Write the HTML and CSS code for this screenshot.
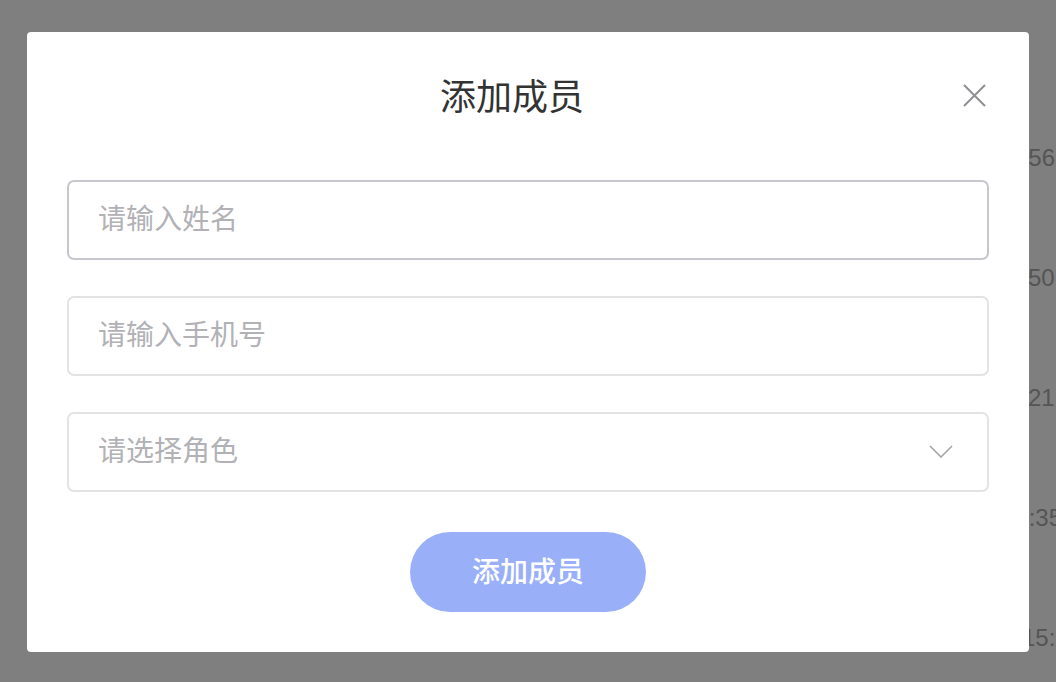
FILE: index.html
```html
<!DOCTYPE html>
<html lang="zh-CN">
<head>
<meta charset="utf-8">
<title>添加成员</title>
<link rel="stylesheet" href="styles.css">
</head>
<body>
<div class="page">
  <div class="row r1"><span class="time">2023-05-12 10:23:56</span></div>
  <div class="row r2"><span class="time">2023-05-11 18:50:32</span></div>
  <div class="row r3"><span class="time">2023-05-10 09:21:47</span></div>
  <div class="row r4"><span class="time">2023-05-09 16:12:35</span></div>
  <div class="row r5"><span class="time">2023-05-08 11:15:08</span></div>
</div>
<div class="overlay"></div>
<div class="modal">
  <div class="header">
    <h2 class="title">添加成员</h2>
    <span class="close" aria-label="关闭">
      <svg width="23" height="23" viewBox="0 0 23 23"><path d="M1 1 L22 22 M22 1 L1 22" stroke="#8f8f94" stroke-width="2" fill="none"/></svg>
    </span>
  </div>
  <div class="form">
    <input class="field focused" type="text" placeholder="请输入姓名">
    <input class="field" type="text" placeholder="请输入手机号">
    <div class="field select">
      <span class="placeholder">请选择角色</span>
      <svg class="chev" width="24" height="13" viewBox="0 0 24 13"><path d="M1 1 L12 12 L23 1" stroke="#a3a3a8" stroke-width="1.5" fill="none"/></svg>
    </div>
    <button class="submit" type="button">添加成员</button>
  </div>
</div>
</body>
</html>
```
FILE: styles.css
```css
html, body {
  margin: 0;
  padding: 0;
  width: 1056px;
  height: 682px;
  overflow: hidden;
  background: #ffffff;
  font-family: "Liberation Sans", "Noto Sans CJK SC", sans-serif;
}

.page {
  padding-top: 98px;
  width: 1056px;
}

.row {
  height: 120px;
  display: flex;
  align-items: center;
  justify-content: flex-end;
}

.time {
  font-size: 24px;
  color: #aaaaaa;
  white-space: nowrap;
}

.r1 { margin-right: 1px; }
.r2 { margin-right: -32px; }
.r3 { margin-right: -32px; }
.r4 { margin-right: -6px; }
.r5 { margin-right: -26px; }

.overlay {
  position: fixed;
  inset: 0;
  background: rgba(0, 0, 0, 0.5);
}

.modal {
  position: fixed;
  left: 27px;
  top: 32px;
  width: 1002px;
  height: 620px;
  box-sizing: border-box;
  background: #ffffff;
  border-radius: 4px;
  padding: 40px;
  font-family: "Noto Sans CJK SC", "Liberation Sans", sans-serif;
}

.header {
  display: flex;
  align-items: center;
  padding-right: 3px;
}

.title {
  flex: 1;
  margin: -3px 0 3px 0;
  text-align: center;
  font-size: 36px;
  font-weight: 400;
  line-height: 50px;
  color: #333333;
}

.close {
  width: 23px;
  height: 23px;
  margin-left: 6px;
  margin-top: -4px;
  display: flex;
}

.form {
  margin-top: 58px;
  display: flex;
  flex-direction: column;
  align-items: center;
  gap: 36px;
}

.field {
  width: 100%;
  height: 80px;
  box-sizing: border-box;
  border: 2px solid #e3e3e6;
  border-radius: 7px;
  padding: 0 34px 6px 29px;
  font-family: "Noto Sans CJK SC", sans-serif;
  font-size: 28px;
  color: #333333;
  background: #ffffff;
  outline: none;
  margin: 0;
}

.field.focused {
  border-color: #c6c7cc;
}

.field::placeholder,
.placeholder {
  color: #b1b1b6;
}

.select {
  display: flex;
  align-items: center;
  justify-content: space-between;
}

.chev {
  display: block;
  margin-top: 4px;
}

.submit {
  margin-top: 4px;
  width: 236px;
  height: 80px;
  border: none;
  border-radius: 40px;
  background: #99b0f9;
  color: #ffffff;
  font-family: "Noto Sans CJK SC", sans-serif;
  font-size: 28px;
  font-weight: 500;
  padding: 0 0 4px 0;
}
```
